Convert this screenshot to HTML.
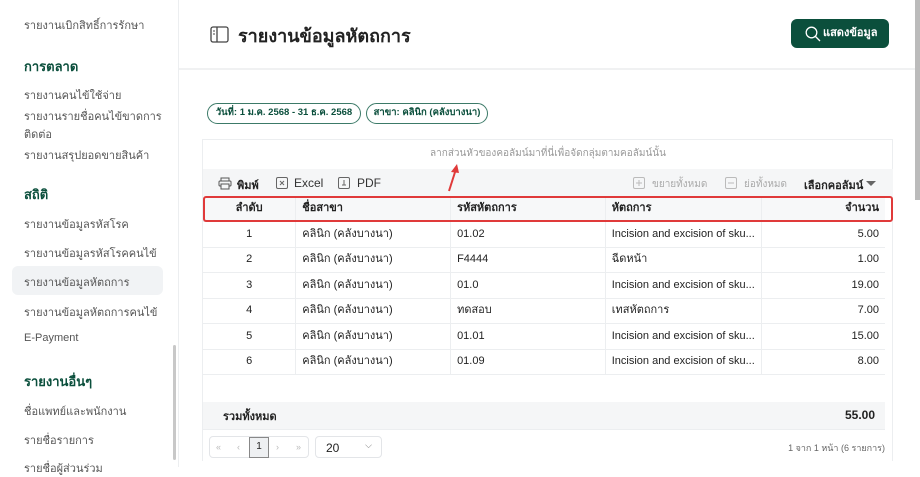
<!DOCTYPE html>
<html><head><meta charset="utf-8"><style>
*{box-sizing:border-box;margin:0;padding:0}
body{width:920px;height:467px;overflow:hidden;background:#fff;font-family:"Liberation Sans","Noto Sans CJK SC",sans-serif;color:#222;position:relative}
.abs{position:absolute}
.sb{left:0;top:0;width:179px;height:467px;border-right:1px solid #eceef0;background:#fff}
.sb .l{position:absolute;left:24px;font-size:11px;color:#555}
.sb .h{position:absolute;left:24px;font-size:13px;font-weight:bold;color:#0b4f3c}
.t{font-size:11px}
table{border-collapse:collapse;position:absolute;left:203px;top:196px;width:682px;font-size:11px}
td,th{height:25.5px;border-bottom:1px solid #eceef0;border-right:1px solid #eceef0;padding:0 6px;text-align:left;white-space:nowrap;line-height:1}
th{font-weight:bold;background:#f7f8f9}
td:last-child,th:last-child{text-align:right;border-right:none}
td:first-child,th:first-child{text-align:center}
</style></head><body>
<div class="abs" style="left:2px;top:0;width:1px;height:467px;background:#ccc"></div>
<div class="abs sb">
<div class="l" style="top:16px">รายงานเบิกสิทธิ์การรักษา</div>
<div class="h" style="top:56px">การตลาด</div>
<div class="l" style="top:86px">รายงานคนไข้ใช้จ่าย</div>
<div class="l" style="top:107px">รายงานรายชื่อคนไข้ขาดการ</div>
<div class="l" style="top:125px">ติดต่อ</div>
<div class="l" style="top:146px">รายงานสรุปยอดขายสินค้า</div>
<div class="h" style="top:184px">สถิติ</div>
<div class="l" style="top:215px">รายงานข้อมูลรหัสโรค</div>
<div class="l" style="top:244px">รายงานข้อมูลรหัสโรคคนไข้</div>
<div class="abs" style="left:12px;top:266px;width:151px;height:29px;background:#f1f3f5;border-radius:6px"></div>
<div class="l" style="top:273px">รายงานข้อมูลหัตถการ</div>
<div class="l" style="top:303px">รายงานข้อมูลหัตถการคนไข้</div>
<div class="l" style="top:332px">E-Payment</div>
<div class="h" style="top:371px">รายงานอื่นๆ</div>
<div class="l" style="top:402px">ชื่อแพทย์และพนักงาน</div>
<div class="l" style="top:431px">รายชื่อรายการ</div>
<div class="l" style="top:459px">รายชื่อผู้ส่วนร่วม</div>
<div class="abs" style="left:173px;top:345px;width:3px;height:115px;background:#c8c8c8;border-radius:2px"></div>
</div>
<div class="abs" style="left:179px;top:68px;width:736px;height:2px;background:#f0f1f2"></div>
<div class="abs" style="left:915px;top:0;width:5px;height:200px;background:#bbb"></div>
<svg class="abs" style="left:210px;top:26px" width="19" height="17" viewBox="0 0 19 17"><rect x="1" y="1" width="17" height="15" rx="2" fill="none" stroke="#444" stroke-width="1.3"/><line x1="7" y1="1" x2="7" y2="16" stroke="#444" stroke-width="1.3"/><line x1="3" y1="5" x2="5" y2="5" stroke="#444"/><line x1="3" y1="8" x2="5" y2="8" stroke="#444"/></svg>
<div class="abs" style="left:238px;top:21px;font-size:18px;font-weight:bold;color:#222">รายงานข้อมูลหัตถการ</div>
<div class="abs" style="left:791px;top:19px;width:98px;height:29px;background:#0b4f3c;border-radius:6px;color:#fff;font-size:11px;font-weight:bold;line-height:29px;padding-left:32px">แสดงข้อมูล</div>
<svg class="abs" style="left:805px;top:26px" width="16" height="16" viewBox="0 0 16 16"><circle cx="6.5" cy="6.5" r="5.3" fill="none" stroke="#fff" stroke-width="1.3"/><line x1="10.5" y1="10.5" x2="15" y2="15" stroke="#fff" stroke-width="1.3"/></svg>
<div class="abs" style="left:207px;top:103px;width:154px;height:21px;border:1.5px solid #3c7a68;border-radius:11px;font-size:9.5px;font-weight:bold;color:#0b4f3c;text-align:center;line-height:18px;white-space:nowrap">วันที่: 1 ม.ค. 2568 - 31 ธ.ค. 2568</div>
<div class="abs" style="left:366px;top:103px;width:122px;height:21px;border:1.5px solid #3c7a68;border-radius:11px;font-size:9.5px;font-weight:bold;color:#0b4f3c;text-align:center;line-height:18px;white-space:nowrap">สาขา: คลินิก (คลังบางนา)</div>
<div class="abs" style="left:202px;top:139px;width:691px;height:322px;border:1px solid #eceef0;border-bottom:none"></div>
<div class="abs" style="left:203px;top:146px;width:690px;text-align:center;font-size:10px;color:#999">ลากส่วนหัวของคอลัมน์มาที่นี่เพื่อจัดกลุ่มตามคอลัมน์นั้น</div>
<div class="abs" style="left:203px;top:169px;width:690px;height:28px;background:#f5f6f7"></div>
<svg class="abs" style="left:218px;top:177px" width="14" height="13" viewBox="0 0 14 13"><rect x="3" y="1" width="8" height="3" fill="none" stroke="#555"/><rect x="1" y="4" width="12" height="5" rx="1" fill="none" stroke="#555"/><rect x="3" y="7" width="8" height="5" fill="#f5f6f7" stroke="#555"/></svg>
<div class="abs t" style="left:237px;top:176px;font-weight:bold">พิมพ์</div>
<svg class="abs" style="left:276px;top:177px" width="12" height="12"><rect x="0.5" y="0.5" width="11" height="11" rx="1.5" fill="none" stroke="#666"/><path d="M4 4l4 4M8 4l-4 4" stroke="#666"/></svg>
<div class="abs" style="left:294px;top:176px;font-size:12px;color:#333">Excel</div>
<svg class="abs" style="left:338px;top:177px" width="12" height="12"><rect x="0.5" y="0.5" width="11" height="11" rx="1.5" fill="none" stroke="#666"/><path d="M6 3v5M4 8h4" stroke="#666"/></svg>
<div class="abs" style="left:357px;top:176px;font-size:12px;color:#333">PDF</div>
<svg class="abs" style="left:633px;top:177px" width="12" height="12"><rect x="0.5" y="0.5" width="11" height="11" rx="1.5" fill="none" stroke="#bbb"/><path d="M6 3v6M3 6h6" stroke="#bbb"/></svg>
<div class="abs" style="left:652px;top:177px;font-size:10px;color:#aaa">ขยายทั้งหมด</div>
<svg class="abs" style="left:725px;top:177px" width="12" height="12"><rect x="0.5" y="0.5" width="11" height="11" rx="1.5" fill="none" stroke="#bbb"/><path d="M3 6h6" stroke="#bbb"/></svg>
<div class="abs" style="left:744px;top:177px;font-size:10px;color:#aaa">ย่อทั้งหมด</div>
<div class="abs" style="left:804px;top:176px;font-size:11px;font-weight:bold">เลือกคอลัมน์</div>
<div class="abs" style="left:866px;top:181px;width:0;height:0;border-left:5px solid transparent;border-right:5px solid transparent;border-top:5px solid #666"></div>
<table>
<colgroup><col style="width:93px"><col style="width:155px"><col style="width:155px"><col style="width:155px"><col style="width:124px"></colgroup>
<tr><th>ลำดับ</th><th>ชื่อสาขา</th><th>รหัสหัตถการ</th><th>หัตถการ</th><th>จำนวน</th></tr>
<tr><td>1</td><td>คลินิก (คลังบางนา)</td><td>01.02</td><td>Incision and excision of sku...</td><td>5.00</td></tr>
<tr><td>2</td><td>คลินิก (คลังบางนา)</td><td>F4444</td><td>ฉีดหน้า</td><td>1.00</td></tr>
<tr><td>3</td><td>คลินิก (คลังบางนา)</td><td>01.0</td><td>Incision and excision of sku...</td><td>19.00</td></tr>
<tr><td>4</td><td>คลินิก (คลังบางนา)</td><td>ทดสอบ</td><td>เทสหัตถการ</td><td>7.00</td></tr>
<tr><td>5</td><td>คลินิก (คลังบางนา)</td><td>01.01</td><td>Incision and excision of sku...</td><td>15.00</td></tr>
<tr><td>6</td><td>คลินิก (คลังบางนา)</td><td>01.09</td><td>Incision and excision of sku...</td><td>8.00</td></tr>
</table>
<div class="abs" style="left:203px;top:196px;width:690px;height:26px;border:2px solid #e03a3a;border-radius:3px"></div>
<svg class="abs" style="left:440px;top:160px" width="25" height="35"><line x1="9" y1="31" x2="16" y2="9" stroke="#e03a3a" stroke-width="2"/><path d="M17 4l-6 8 8 1z" fill="#e03a3a"/></svg>
<div class="abs" style="left:203px;top:402px;width:682px;height:28px;background:#f5f6f7;border-bottom:1px solid #eceef0"></div>
<div class="abs" style="left:223px;top:407px;font-size:11px;font-weight:bold">รวมทั้งหมด</div>
<div class="abs" style="left:800px;top:408px;width:75px;text-align:right;font-size:12px;font-weight:bold">55.00</div>
<div class="abs" style="left:209px;top:436px;width:100px;height:22px;border:1px solid #e3e5e8;border-radius:4px;font-size:9px;color:#bbb">
<span class="abs" style="left:6px;top:5px">«</span><span class="abs" style="left:27px;top:5px">‹</span><span class="abs" style="left:66px;top:5px">›</span><span class="abs" style="left:86px;top:5px">»</span></div>
<div class="abs" style="left:249px;top:437px;width:20px;height:21px;border:1.5px solid #888;background:#eef0f2;font-size:10px;text-align:center;line-height:18px">1</div>
<div class="abs" style="left:315px;top:436px;width:67px;height:22px;border:1px solid #e3e5e8;border-radius:4px;font-size:12px;padding:4px 10px">20<span style="position:absolute;right:9px;top:3px;font-size:9px;color:#777">⌵</span></div>
<div class="abs" style="left:760px;top:441px;width:125px;text-align:right;font-size:9px;color:#666">1 จาก 1 หน้า (6 รายการ)</div>
</body></html>
